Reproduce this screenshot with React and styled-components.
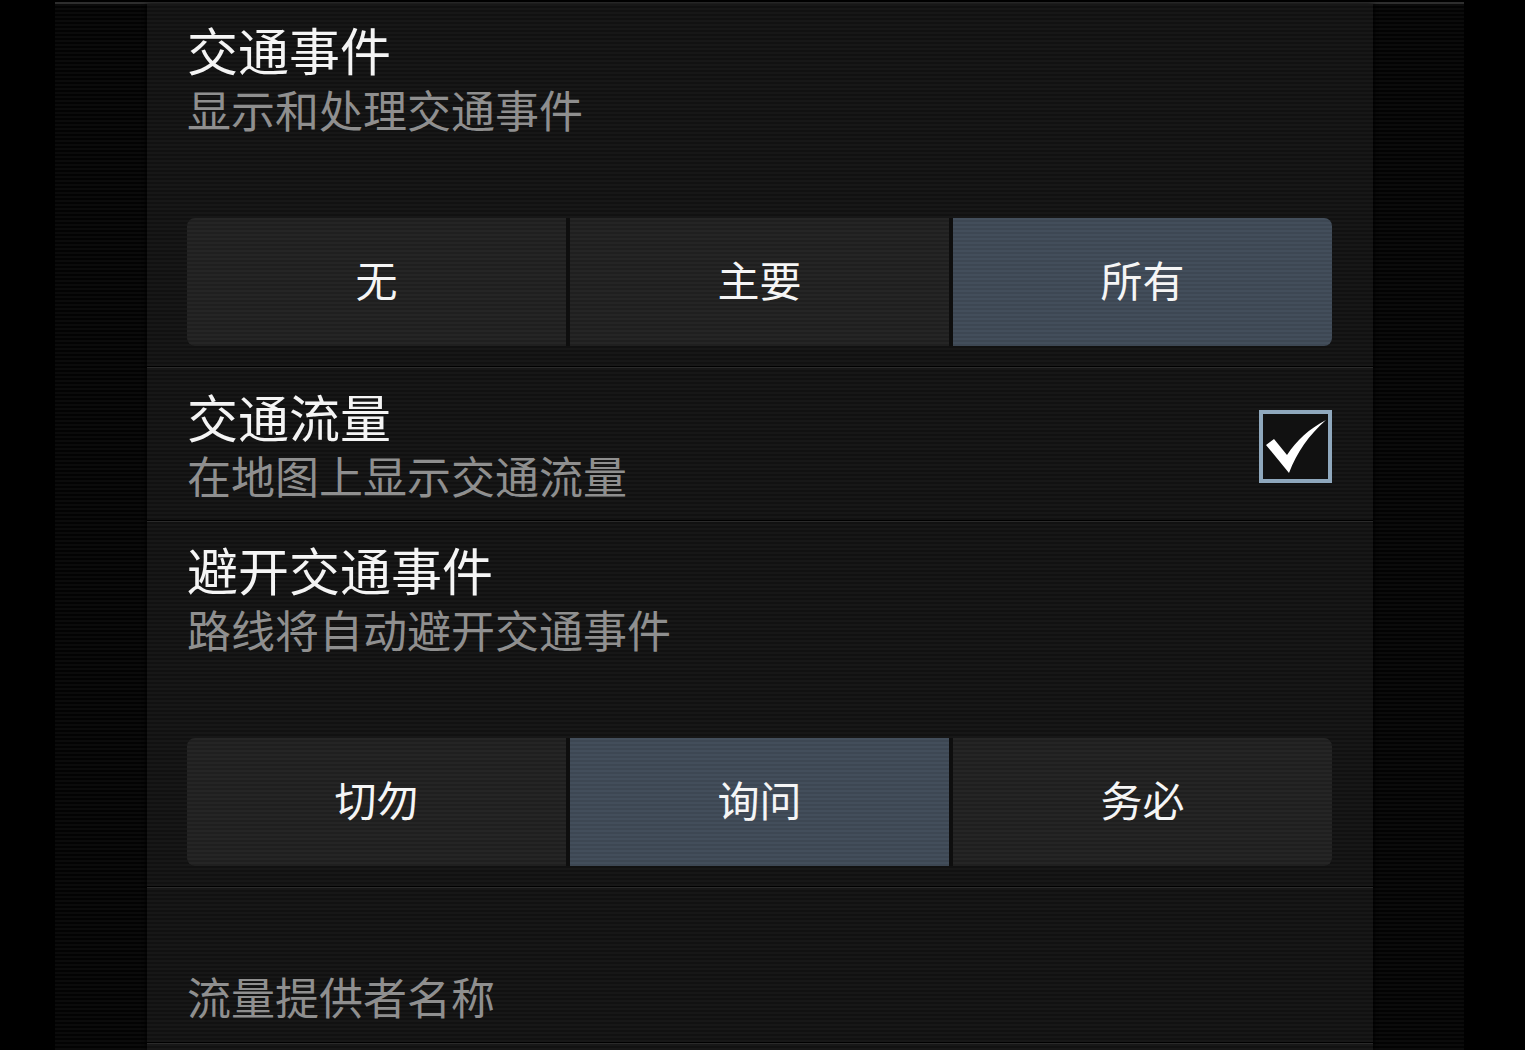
import React from "react";
import styled, { createGlobalStyle } from "styled-components";

const Global = createGlobalStyle`
  html, body {
    margin: 0;
    padding: 0;
    background: #000;
    overflow: hidden;
  }
  * { box-sizing: border-box; }
`;

const FONT = `"Noto Sans CJK SC", "Noto Sans", sans-serif`;

const Screen = styled.div`
  width: 1525px;
  height: 1050px;
  background: #000;
  display: flex;
  font-family: ${FONT};
`;

const Frame = styled.div`
  margin-left: 55px;
  margin-top: 2px;
  width: 1409px;
  height: 1048px;
  border-top: 2px solid #2e2e2e;
  padding: 0 91px 0 92px;
  background: repeating-linear-gradient(180deg, #0b0b0b 0 2px, #030303 2px 4px);
`;

const Panel = styled.div`
  height: 100%;
  display: flex;
  flex-direction: column;
  background: repeating-linear-gradient(180deg, #171717 0 2px, #111111 2px 4px);
  box-shadow: -2px 0 3px rgba(0, 0, 0, 0.5), 2px 0 3px rgba(0, 0, 0, 0.5);
`;

const Pref = styled.div`
  padding: ${(p) => p.$pad};
  padding-left: 40px;
  padding-right: 41px;
  display: flex;
  align-items: center;
  gap: 20px;
`;

const PrefBlock = styled.div`
  padding: ${(p) => p.$pad};
  padding-left: 40px;
  padding-right: 41px;
  display: flex;
  flex-direction: column;
`;

const TextCol = styled.div`
  flex: 1;
  display: flex;
  flex-direction: column;
`;

const Title = styled.div`
  font-size: 51px;
  line-height: 56px;
  color: #f4f4f4;
  white-space: nowrap;
`;

const Summary = styled.div`
  font-size: 44px;
  line-height: 52px;
  color: #8f8f8f;
  white-space: nowrap;
  margin-top: ${(p) => p.$mt || 0}px;
`;

const Divider = styled.div`
  height: 2px;
  flex: none;
  border-top: 1px solid #000;
  border-bottom: 1px solid #2a2a2a;
`;

const Segmented = styled.div`
  margin-top: 82.5px;
  height: 128px;
  display: flex;
  gap: 4px;
  background: #0e0e0e;
  border-radius: 8px;
`;

const Segment = styled.div`
  flex: 1;
  display: flex;
  align-items: center;
  justify-content: center;
  padding-bottom: 7px;
  font-size: 42px;
  color: #f5f5f5;
  background: ${(p) =>
    p.$active
      ? "repeating-linear-gradient(180deg, #434e5b 0 2px, #3d4753 2px 4px)"
      : "repeating-linear-gradient(180deg, #252525 0 2px, #1f1f1f 2px 4px)"};
  &:first-child {
    border-radius: 8px 0 0 8px;
  }
  &:last-child {
    border-radius: 0 8px 8px 0;
  }
`;

const CheckBox = styled.div`
  width: 73px;
  height: 73px;
  flex: none;
  margin-top: 5px;
  border: 4px solid #8fa8bd;
  background: #111;
  display: flex;
  align-items: center;
  justify-content: center;
`;

const Check = () => (
  <svg width="65" height="65" viewBox="4 4 65 65">
    <path
      d="M7 35 L15 29 L28 45 C38 30 50 19 67 10 C50 25 38 42 30 63 Z"
      fill="#fff"
    />
  </svg>
);

const SegmentGroup = ({ items, active }) => (
  <Segmented>
    {items.map((t, i) => (
      <Segment key={t} $active={i === active}>
        {t}
      </Segment>
    ))}
  </Segmented>
);

export default function App() {
  return (
    <Screen>
      <Global />
      <Frame>
        <Panel>
          <PrefBlock $pad="16.6px 0 20px">
            <Title>交通事件</Title>
            <Summary $mt={6.9}>显示和处理交通事件</Summary>
            <SegmentGroup items={["无", "主要", "所有"]} active={2} />
          </PrefBlock>
          <Divider />
          <Pref $pad="19.6px 0 19px">
            <TextCol>
              <Title>交通流量</Title>
              <Summary $mt={5.4}>在地图上显示交通流量</Summary>
            </TextCol>
            <CheckBox>
              <Check />
            </CheckBox>
          </Pref>
          <Divider />
          <PrefBlock $pad="18.6px 0 20px">
            <Title>避开交通事件</Title>
            <Summary $mt={6.9}>路线将自动避开交通事件</Summary>
            <SegmentGroup items={["切勿", "询问", "务必"]} active={1} />
          </PrefBlock>
          <Divider />
          <PrefBlock $pad="82.5px 0 19.5px">
            <Summary>流量提供者名称</Summary>
          </PrefBlock>
          <Divider />
        </Panel>
      </Frame>
    </Screen>
  );
}
